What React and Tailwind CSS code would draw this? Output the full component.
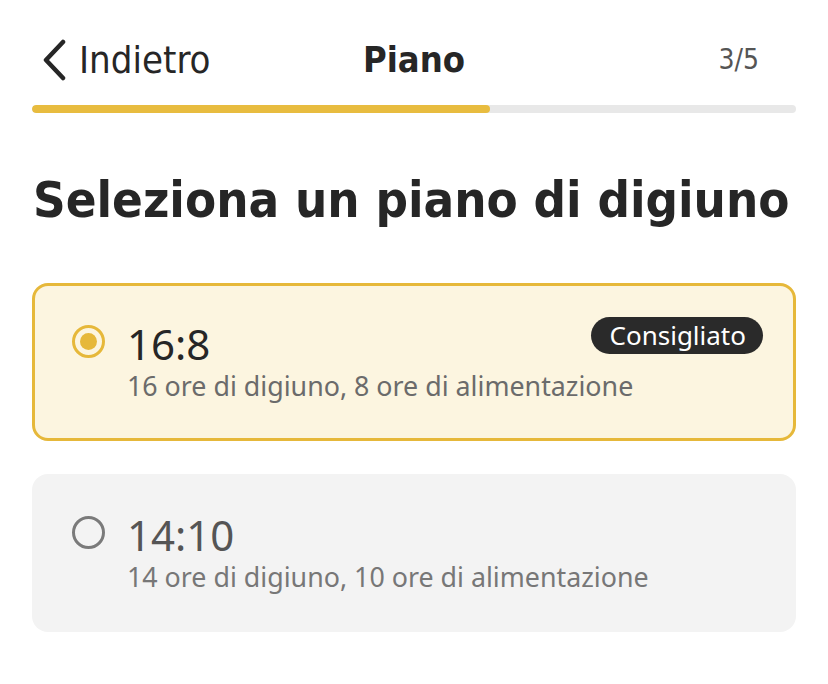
import React from 'react';

const condensed = { fontFamily: '"Liberation Sans Narrow", "DejaVu Sans Condensed", "Liberation Sans", sans-serif' };

function Radio({ checked }) {
  return (
    <div className={`w-[33px] h-[33px] rounded-full border-[3px] flex items-center justify-center shrink-0 ${checked ? 'border-[#e6b83a]' : 'border-[#7a7a7a]'}`}>
      {checked && <div className="w-[17px] h-[17px] rounded-full bg-[#e6b83a]" />}
    </div>
  );
}

function PlanCard({ ratio, desc, checked, badge }) {
  return (
    <div
      className={`rounded-[16px] h-[158px] flex items-start pl-[37px] pr-[30px] pt-[34px] ${
        checked ? 'bg-[#fcf5e0] border-[3px] border-[#e6b83a]' : 'bg-[#f3f3f3] border-[3px] border-transparent'
      }`}
    >
      <div className="mt-[5px]"><Radio checked={checked} /></div>
      <div className="ml-[22px] flex-1">
        <div className="flex items-center justify-between">
          <span className={`text-[42px] leading-[48px] ${checked ? 'text-[#262626]' : 'text-[#555555]'}`}>{ratio}</span>
          {badge && (
            <span className="bg-[#2a2a2a] text-white text-[26px] leading-[37px] pl-[18px] pr-[17px] rounded-full -mt-[18px]">{badge}</span>
          )}
        </div>
        <div className={`text-[26.8px] leading-[36px] ${checked ? 'text-[#6b6b6b]' : 'text-[#777777]'}`}>{desc}</div>
      </div>
    </div>
  );
}

export default function App() {
  return (
    <div className="w-[828px] h-[684px] bg-white px-[32px] overflow-hidden" style={{ fontFamily: '"Noto Sans", "Open Sans", sans-serif' }}>
      <div className="h-[105px] pt-[38px] grid grid-cols-3 items-start" style={condensed}>
        <div className="flex items-center gap-[12px] pl-[9px] text-[#262626]">
          <svg width="26" height="42" viewBox="0 0 26 42" fill="none">
            <path d="M22 3 L5 21 L22 39" stroke="#262626" strokeWidth="4.5" strokeLinecap="round" strokeLinejoin="round" />
          </svg>
          <span className="text-[38px] leading-[44px]">Indietro</span>
        </div>
        <div className="text-center font-bold text-[36px] leading-[44px] text-[#262626]">Piano</div>
        <div className="text-right pr-[37px] text-[28px] leading-[44px] text-[#555555]">3/5</div>
      </div>
      <div className="h-[8px] rounded-full bg-[#e8e8e8] overflow-hidden">
        <div className="h-full w-[60%] bg-[#e8bc3f] rounded-full" />
      </div>
      <h1 className="mt-[58px] text-[50.5px] leading-[58px] font-bold text-[#262626] pl-[1px]" style={condensed}>
        Seleziona un piano di digiuno
      </h1>
      <div className="mt-[54px] flex flex-col gap-[33px]">
        <PlanCard ratio="16:8" desc="16 ore di digiuno, 8 ore di alimentazione" checked badge="Consigliato" />
        <PlanCard ratio="14:10" desc="14 ore di digiuno, 10 ore di alimentazione" />
      </div>
    </div>
  );
}
